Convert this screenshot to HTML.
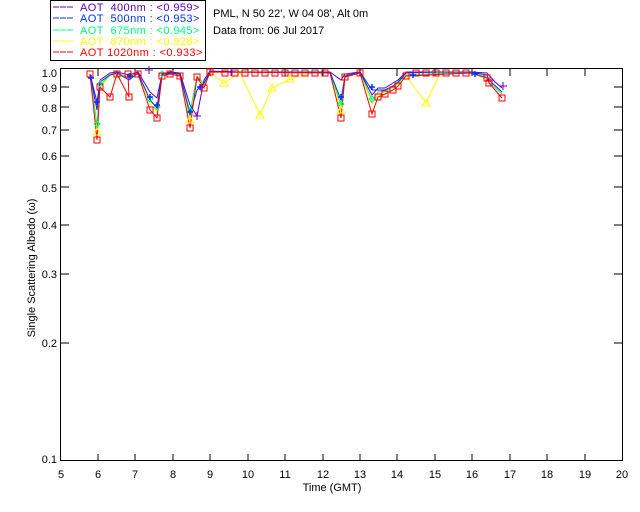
<!DOCTYPE html>
<html><head><meta charset="utf-8"><style>
body{margin:0;background:#fff;width:640px;height:512px;overflow:hidden}
svg{display:block}
text{font-family:"Liberation Sans",sans-serif;font-size:11px}
</style></head><body>
<svg width="640" height="512" viewBox="0 0 640 512" xmlns="http://www.w3.org/2000/svg">
<rect x="50.5" y="0.5" width="155" height="60" fill="none" stroke="#000"/>
<g font-size="11" letter-spacing="0.4">
<line x1="53" y1="7" x2="74" y2="7" stroke="#6000c0" stroke-dasharray="6,1"/><text x="80" y="11" fill="#6000c0" xml:space="preserve">AOT  400nm : &lt;0.959&gt;</text>
<line x1="53" y1="18" x2="74" y2="18" stroke="#0030ff" stroke-dasharray="6,1"/><text x="80" y="22" fill="#0030ff" xml:space="preserve">AOT  500nm : &lt;0.953&gt;</text>
<line x1="53" y1="30" x2="74" y2="30" stroke="#00ff80" stroke-dasharray="6,1"/><text x="80" y="34" fill="#00ff80" xml:space="preserve">AOT  675nm : &lt;0.945&gt;</text>
<line x1="53" y1="41" x2="74" y2="41" stroke="#ffff00" stroke-dasharray="6,1"/><text x="80" y="45" fill="#ffff00" xml:space="preserve">AOT  870nm : &lt;0.928&gt;</text>
<line x1="53" y1="52" x2="74" y2="52" stroke="#ff0000" stroke-dasharray="6,1"/><text x="80" y="56" fill="#ff0000" xml:space="preserve">AOT 1020nm : &lt;0.933&gt;</text>
</g>
<text x="213" y="17">PML, N 50 22', W 04 08', Alt 0m</text>
<text x="213" y="34">Data from: 06 Jul 2017</text>

<rect x="60.5" y="68.5" width="562" height="392" fill="none" stroke="#000"/>
<g stroke="#000">
<path d="M98 461v-7M135 461v-7M173 461v-7M210 461v-7M248 461v-7M285 461v-7M323 461v-7M360 461v-7M397 461v-7M435 461v-7M472 461v-7M510 461v-7M547 461v-7M585 461v-7"/>
<path d="M98 69v7M135 69v7M173 69v7M210 69v7M248 69v7M285 69v7M323 69v7M360 69v7M397 69v7M435 69v7M472 69v7M510 69v7M547 69v7M585 69v7"/>
<path d="M61 87h8M61 107h8M61 130h8M61 156h8M61 187h8M61 225h8M61 274h8M61 343h8"/>
<path d="M622 87h-8M622 107h-8M622 130h-8M622 156h-8M622 187h-8M622 225h-8M622 274h-8M622 343h-8"/>
</g>
<g text-anchor="end" font-size="10">
<text x="57" y="77">1.0</text><text x="57" y="92">0.9</text><text x="57" y="112">0.8</text><text x="57" y="134">0.7</text><text x="57" y="160">0.6</text><text x="57" y="192">0.5</text><text x="57" y="229">0.4</text><text x="57" y="278">0.3</text><text x="57" y="347">0.2</text><text x="57" y="463">0.1</text>
</g>
<g text-anchor="middle" font-size="10">
<text x="61" y="478">5</text><text x="98" y="478">6</text><text x="135" y="478">7</text><text x="173" y="478">8</text><text x="210" y="478">9</text><text x="248" y="478">10</text><text x="285" y="478">11</text><text x="323" y="478">12</text><text x="360" y="478">13</text><text x="397" y="478">14</text><text x="435" y="478">15</text><text x="472" y="478">16</text><text x="510" y="478">17</text><text x="547" y="478">18</text><text x="585" y="478">19</text><text x="622" y="478">20</text>
<text x="332" y="491">Time (GMT)</text>
</g>
<text transform="translate(35,268) rotate(-90)" text-anchor="middle" font-size="10">Single Scattering Albedo (ω)</text>

<g fill="none" stroke-width="1">
<polyline stroke="#ffff00" points="90,74 97,132 100,87 110,76 117,74 129,80 138,74 150,104 157,112 162,76 170,74 180,76 190,120 197,77 204,85 210,72 224,83 240,73 260,115 272,88 290,79 310,73 330,73 341,110 345,77 360,73 372,104 378,94 385,92 393,88 398,84 406,76 426,103 440,73 470,73 487,78 489,83 502,92"/>
<polyline stroke="#00ff80" points="90,74 97,125 100,85 110,75 117,73 129,78 138,73 150,100 157,108 162,75 170,73 180,75 190,112 197,76 204,84 210,72 330,72 341,105 345,76 360,72 372,100 378,92 385,91 393,87 398,83 406,75 470,72 487,77 489,82 502,94"/>
<polyline stroke="#6000c0" points="90,74 97,110 100,80 110,73 117,72 129,75 138,72 150,92 157,98 162,74 170,72 180,73 190,105 197,116 204,80 210,71 240,72 300,72 330,72 341,80 345,74 360,72 372,95 378,88 385,88 393,83 398,80 406,72 440,72 470,72 487,73 495,82 502,88"/>
<polyline stroke="#0030ff" points="90,74 97,102 100,82 110,75 117,73 129,80 138,73 150,100 157,108 162,75 170,73 180,74 190,115 197,90 204,83 210,72 300,72 330,72 341,100 345,76 360,72 372,90 378,90 385,90 393,86 398,82 406,73 440,72 470,72 487,75 489,80 502,92"/>
<polyline stroke="#ff0000" points="90,74 97,140 100,87 110,97 117,74 129,97 128,74 138,74 150,110 157,118 162,76 170,74 180,76 190,128 197,77 204,88 210,72 330,73 341,118 345,77 360,73 372,114 378,97 385,94 393,90 398,86 406,76 470,73 487,78 489,83 502,98"/>
</g>
<g fill="none" stroke="#00ff80">
<path d="M97 121l3 3-3 3-3-3zM150 96l3 3-3 3-3-3zM157 104l3 3-3 3-3-3zM190 108l3 3-3 3-3-3zM341 101l3 3-3 3-3-3zM372 96l3 3-3 3-3-3zM162 71l3 3-3 3-3-3zM100 81l3 3-3 3-3-3z"/>
</g>
<g fill="none" stroke="#ff0000">
<path d="M87 71h6v6h-6zM94 137h6v6h-6zM97 84h6v6h-6zM107 94h6v6h-6zM114 71h6v6h-6zM126 94h6v6h-6zM125 71h6v6h-6zM135 71h6v6h-6zM147 107h6v6h-6zM154 115h6v6h-6zM159 73h6v6h-6zM167 71h6v6h-6zM177 73h6v6h-6zM187 125h6v6h-6zM194 74h6v6h-6zM201 85h6v6h-6zM207 69h6v6h-6zM222 70h6v6h-6zM232 70h6v6h-6zM242 70h6v6h-6zM252 70h6v6h-6zM262 70h6v6h-6zM272 70h6v6h-6zM282 70h6v6h-6zM292 70h6v6h-6zM302 70h6v6h-6zM312 70h6v6h-6zM322 70h6v6h-6zM338 115h6v6h-6zM342 74h6v6h-6zM357 70h6v6h-6zM369 111h6v6h-6zM375 94h6v6h-6zM382 91h6v6h-6zM390 87h6v6h-6zM395 83h6v6h-6zM403 73h6v6h-6zM413 70h6v6h-6zM423 70h6v6h-6zM433 70h6v6h-6zM443 70h6v6h-6zM453 70h6v6h-6zM463 70h6v6h-6zM484 75h6v6h-6zM486 80h6v6h-6zM499 95h6v6h-6z"/>
</g>
<g fill="none" stroke="#ffff00">
<path d="M224 79l-4 7h8zM260 111l-4 7h8zM272 84l-4 7h8zM290 75l-4 7h8zM426 99l-4 7h8zM190 116l-4 7h8zM97 128l-4 7h8zM341 106l-4 7h8z"/>
</g>
<g stroke="#0030ff" stroke-width="1.5">
<path d="M94 102h6M97 99v6M147 97h6M150 94v6M154 105h6M157 102v6M187 112h6M190 109v6M338 97h6M341 94v6M369 87h6M372 84v6M127 76h6M130 73v6M410 75h6M413 72v6M472 74h6M475 71v6M197 87h6M200 84v6M88 78h6M91 75v6"/>
</g>
<g stroke="#6000c0">
<path d="M193 116h8M197 112v8M499 86h8M503 82v8M145 70h8M149 66v8M227 72h8M231 68v8"/>
</g>
</svg>
</body></html>
